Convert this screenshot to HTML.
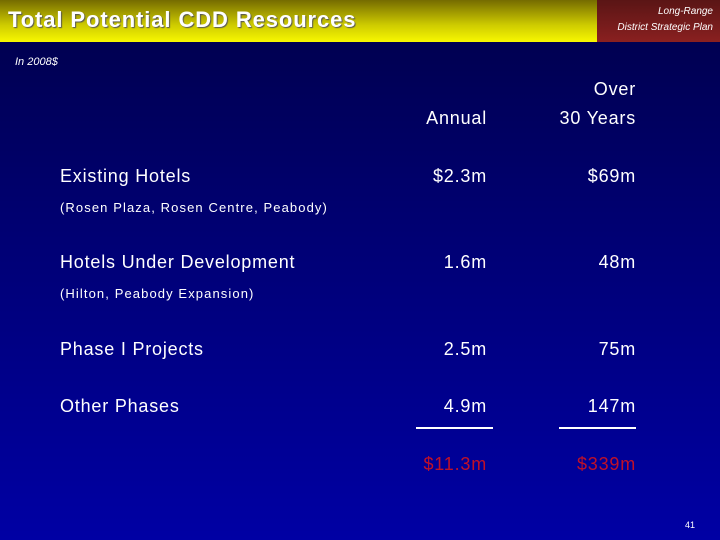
<!DOCTYPE html>
<html><head><style>
body{margin:0;width:720px;height:540px;overflow:hidden;background:linear-gradient(#00004a 0%,#000070 40%,#0000a4 100%);font-family:"Liberation Sans",sans-serif;color:#fff;position:relative}
.hd{position:absolute;left:0;top:0;width:597px;height:42px;background:linear-gradient(#756b00,#cfcc00 60%,#f8f800)}
.hd span{position:absolute;left:8px;top:7px;font-size:22px;letter-spacing:0.9px;font-weight:bold;color:#fff;text-shadow:1px 1px 1px #555}
.rb{position:absolute;left:597px;top:0;width:123px;height:42px;background:linear-gradient(#5a1515,#8a2020)}
.rb div{position:absolute;right:7px;font-size:10px;font-style:italic;color:#fff}
.t{position:absolute;font-size:18px;white-space:nowrap;letter-spacing:0.8px}
.s{position:absolute;font-size:13px;white-space:nowrap;letter-spacing:1.1px}
.r{text-align:right}
.red{color:#c01028}
.ln{position:absolute;height:2px;background:#fff}
</style></head><body>
<div class="hd"><span>Total Potential CDD Resources</span></div>
<div class="rb"><div style="top:6px">Long-Range</div><div style="top:22px">District Strategic Plan</div></div>
<div class="s" style="left:15px;top:56px;font-size:11px;font-style:italic;letter-spacing:0">In 2008$</div>
<div class="t r" style="right:84px;top:79px">Over</div>
<div class="t r" style="right:84px;top:108px">30 Years</div>
<div class="t r" style="right:233px;top:108px">Annual</div>
<div class="t" style="left:60px;top:166px">Existing Hotels</div>
<div class="s" style="left:60px;top:200px">(Rosen Plaza, Rosen Centre, Peabody)</div>
<div class="t r" style="right:233px;top:166px">$2.3m</div>
<div class="t r" style="right:84px;top:166px">$69m</div>
<div class="t" style="left:60px;top:252px">Hotels Under Development</div>
<div class="s" style="left:60px;top:286px">(Hilton, Peabody Expansion)</div>
<div class="t r" style="right:233px;top:252px">1.6m</div>
<div class="t r" style="right:84px;top:252px">48m</div>
<div class="t" style="left:60px;top:339px">Phase I Projects</div>
<div class="t r" style="right:233px;top:339px">2.5m</div>
<div class="t r" style="right:84px;top:339px">75m</div>
<div class="t" style="left:60px;top:396px">Other Phases</div>
<div class="t r" style="right:233px;top:396px">4.9m</div>
<div class="t r" style="right:84px;top:396px">147m</div>
<div class="ln" style="left:416px;top:427px;width:77px"></div>
<div class="ln" style="left:559px;top:427px;width:77px"></div>
<div class="t r red" style="right:233px;top:454px">$11.3m</div>
<div class="t r red" style="right:84px;top:454px">$339m</div>
<div class="s" style="left:685px;top:520px;font-size:9px;letter-spacing:0">41</div>
</body></html>
